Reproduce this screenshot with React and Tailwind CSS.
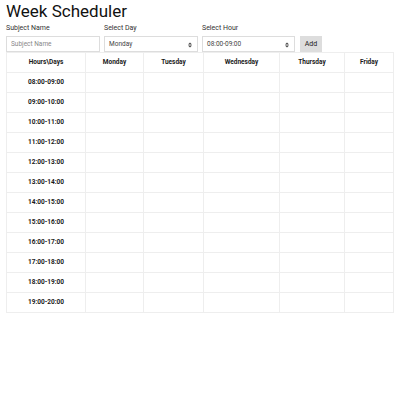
import { useState } from "react";

const days = ["Monday", "Tuesday", "Wednesday", "Thursday", "Friday"];
const colW = ["w-[79px]", "w-[58px]", "w-[60px]", "w-[76px]", "w-[65px]", "w-[49px]"];
const hours = [];
for (let h = 8; h < 20; h++) {
  const a = String(h).padStart(2, "0");
  const b = String(h + 1).padStart(2, "0");
  hours.push(`${a}:00-${b}:00`);
}

function Arrows() {
  return (
    <svg width="4" height="6" viewBox="0 0 4 6" className="absolute right-[5px] top-[5px]">
      <path d="M0 2.4 L2 0.4 L4 2.4 Z M0 3.6 L2 5.6 L4 3.6 Z" fill="#444" />
    </svg>
  );
}

export default function App() {
  const [subject, setSubject] = useState("");
  return (
    <div className="px-[6px] bg-white min-h-[400px] text-[#1a1a1a]" style={{ fontFamily: "Roboto, 'Liberation Sans', sans-serif" }}>
      {/* Title */}
      <h1 className="text-[17px] leading-[22px] font-normal text-[#111]">Week Scheduler</h1>

      {/* Form */}
      <div className="flex items-end mt-[1px]">
        <div className="flex flex-col w-[94px]">
          <label className="text-[7px] leading-[10px] mb-[3px] text-[#333]">Subject Name</label>
          <input
            value={subject}
            onChange={(e) => setSubject(e.target.value)}
            placeholder="Subject Name"
            className="h-[16px] border border-[#ddd] px-[4px] text-[6.5px] placeholder:text-[#888] outline-none"
          />
        </div>
        <div className="flex flex-col w-[94px] ml-[4px]">
          <label className="text-[7px] leading-[10px] mb-[3px] text-[#333]">Select Day</label>
          <div className="relative h-[16px] border border-[#ddd] px-[4px] text-[6.5px] leading-[14px] text-[#444]">
            Monday
            <Arrows />
          </div>
        </div>
        <div className="flex flex-col w-[93px] ml-[4px]">
          <label className="text-[7px] leading-[10px] mb-[3px] text-[#333]">Select Hour</label>
          <div className="relative h-[16px] border border-[#ddd] px-[4px] text-[6.5px] leading-[14px] text-[#444]">
            08:00-09:00
            <Arrows />
          </div>
        </div>
        <button className="ml-[5px] h-[16px] w-[22px] bg-[#dddddd] text-[7px] text-[#222]">Add</button>
      </div>

      {/* Table */}
      <table className="border-collapse table-fixed w-[387px] text-[6.5px] font-bold">
        <thead>
          <tr className="h-[20px]">
            <th className={`${colW[0]} border border-[#eeeeee] font-bold pt-[1px]`}>Hours\Days</th>
            {days.map((d, i) => (
              <th key={d} className={`${colW[i + 1]} border border-[#eeeeee] font-bold pt-[1px]`}>
                {d}
              </th>
            ))}
          </tr>
        </thead>
        <tbody>
          {hours.map((h) => (
            <tr key={h} className="h-[20px]">
              <td className="border border-[#eeeeee] text-center pt-[1px]">{h}</td>
              {days.map((d) => (
                <td key={d} className="border border-[#eeeeee]"></td>
              ))}
            </tr>
          ))}
        </tbody>
      </table>
    </div>
  );
}
